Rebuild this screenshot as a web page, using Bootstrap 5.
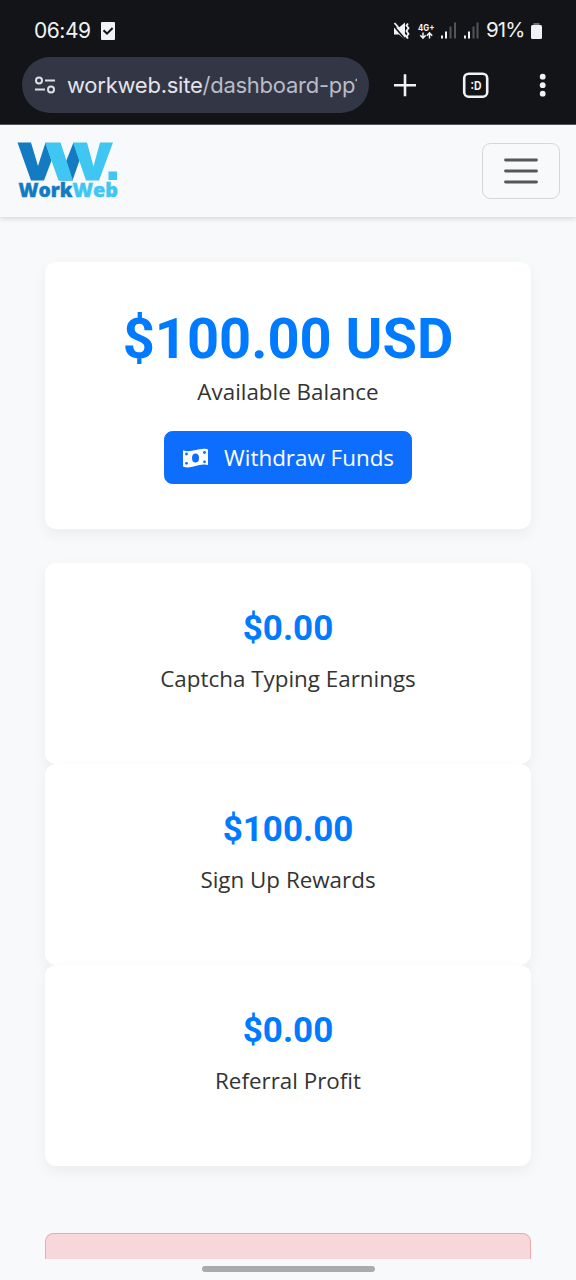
<!DOCTYPE html>
<html lang="en">
<head>
<meta charset="utf-8">
<meta name="viewport" content="width=device-width, initial-scale=1">
<title>WorkWeb Dashboard</title>
<link href="https://cdn.jsdelivr.net/npm/bootstrap@5.3.0/dist/css/bootstrap.min.css" rel="stylesheet">
<script src="https://cdn.jsdelivr.net/npm/bootstrap@5.3.0/dist/js/bootstrap.bundle.min.js" defer></script>
<style>
body{width:576px;height:1280px;overflow:hidden;background:#f8f9fa;color:#333;font-family:"Open Sans",sans-serif;font-size:22.4px;line-height:33.6px}
svg{display:block;flex:none}
.chrome{height:125px;background:#121418;color:#f1f2f4;font-family:Inter,Roboto,sans-serif;border-bottom:1px solid #55565a}
.status{height:57px;padding:4px 32px 0 34px;font-size:21px;line-height:1}
.clock{letter-spacing:-.45px;width:67px}
.pct{font-size:20.5px;letter-spacing:-.9px;width:43px;white-space:nowrap}
.tools{height:56px;padding-left:22px}
.url{width:347px;height:56px;border-radius:28px;background:#333745;padding-left:12px;font-size:22px}
.address{width:290px;overflow:hidden;white-space:nowrap;letter-spacing:-.25px;margin-left:11px;line-height:32px;color:#e3e4ea}
.address span{color:#b9bcc7}
.topbar{height:92px;padding:0 16.5px 1px 17px;box-shadow:0 2px 5px rgba(0,0,0,.13);background:#f8f9fa}
.topbar .navbar-toggler{width:77.5px;height:56px;border:1.4px solid #d5d6d8;border-radius:8.4px;padding:0}
.page{padding:44.6px 45px 0}
.tile{border:0;border-radius:11px;box-shadow:0 5.6px 14px rgba(0,0,0,.05);height:201px;padding-top:41px;background:#fff;color:#333}
.balance{height:267px;margin-bottom:34px;padding-top:44px}
.amount{font-family:Roboto,sans-serif;font-weight:700;color:#007bff;font-size:35px;line-height:50px}
.balance .amount{font-size:56px;line-height:67px}
.caption{margin-top:8px}
.balance .caption{margin-top:2px}
.withdraw{width:248px;height:52.5px;margin-top:23px;border-radius:8.4px;font-size:22.4px;padding:1px 17px 0 16.5px;background:#0d6efd}
.notice{height:26px;margin:67.4px 0 0;border:1.4px solid #eba9b0;border-bottom:0;border-radius:8.4px 8.4px 0 0;background:#f8d7da;padding:0}
.handle{width:173px;height:6px;border-radius:3px;background:#a9abac;margin:7.5px auto 0}
</style>
</head>
<body>
<header class="chrome">
  <div class="status d-flex align-items-center">
    <span class="clock">06:49</span>
    <svg width="14" height="18" viewBox="0 0 14 18"><rect width="14" height="18" rx="1" fill="#f1f2f4"/><path d="M2.500 8.300 6 11.600 11.600 6" fill="none" stroke="#121418" stroke-width="2"/></svg>
    <svg class="ms-auto" width="93" height="20" viewBox="393 20.500 93 20">
      <path d="M394 27h5l6-5v17l-6-5h-5z" fill="#f1f2f4"/>
      <path d="m393 24.500 12 14" stroke="#121418" stroke-width="1.600"/>
      <path d="m394.500 22.500 13 15" stroke="#f1f2f4" stroke-width="1.800"/>
      <path d="m408 23-1.500 2 2 2.500-2 3 2 3-2 2.500 1.500 2" fill="none" stroke="#f1f2f4" stroke-width="1.800"/>
      <text x="418" y="30" font-size="9" font-weight="700" textLength="16.500" lengthAdjust="spacingAndGlyphs" fill="#f1f2f4">4G+</text>
      <path d="M423 32v5.500m-2.700-2.700 2.700 2.800 2.700-2.800M429.500 38v-5.500m-2.700 2.700 2.700-2.800 2.700 2.800" fill="none" stroke="#f1f2f4" stroke-width="1.500"/>
      <path d="M441 35h2v3h-2zM445 31h2v7h-2zM464 35h2v3h-2zM468 31h2v7h-2z" fill="#f1f2f4"/>
      <path d="M449.500 26h2v12h-2zM454 22h2v16h-2zM472.500 26h2v12h-2zM476.500 22h2v16h-2z" fill="#53555a"/>
    </svg>
    <span class="pct ms-0">91%</span>
    <svg width="15" height="20" viewBox="529 20.500 15 20"><path d="M533.500 22.500h6v2h-6z" fill="#6c6e72"/><rect x="531" y="24.500" width="11" height="14" rx="1.500" fill="#f1f2f4"/></svg>
  </div>
  <div class="tools d-flex align-items-center">
    <div class="url d-flex align-items-center">
      <svg width="22" height="18" viewBox="0 0 22 18" fill="none" stroke="#dedfe6" stroke-width="2"><circle cx="5" cy="4.500" r="3"/><circle cx="17" cy="13.500" r="3"/><path d="M11 4.500h10M1 13.500h10"/></svg>
      <div class="address">workweb.site<span>/dashboard-pp1</span></div>
    </div>
    <svg width="207" height="28" viewBox="369 71 207 28"><path d="M394 85.300h22M405 74.300v22" stroke="#f1f2f4" stroke-width="2.600"/><rect x="464.200" y="73.700" width="23" height="23" rx="4.500" fill="none" stroke="#f1f2f4" stroke-width="2.600"/><text x="470.500" y="90" font-size="12" font-weight="700" textLength="11" lengthAdjust="spacingAndGlyphs" fill="#f1f2f4">:D</text><g fill="#f1f2f4"><circle cx="542.700" cy="76.700" r="2.900"/><circle cx="542.700" cy="85.200" r="2.900"/><circle cx="542.700" cy="93.700" r="2.900"/></g></svg>
  </div>
</header>
<nav class="navbar topbar d-flex justify-content-between align-items-center">
  <a class="navbar-brand p-0 m-0" href="#" aria-label="WorkWeb">
    <svg width="102" height="60" viewBox="17 141.500 102 60">
      <g fill="#127bc1"><path d="M17.500 143H31l7 23.500 7.500-23.500 6 18-7.500 20H31z"/><path d="m66 162 7.500-19 6 18-7 20H60z"/></g>
      <g fill="#3fc6f3"><path d="M45 143h15.500l12.500 38H58.500z"/><path d="M73 143h14l6.500 24 6.500-24h13l-14 38H86zM108.500 172h8.500v8.500h-8.500z"/></g>
      <g font-family="Open Sans, sans-serif" font-weight="800" font-size="18.500"><text x="18.500" y="197" textLength="54" lengthAdjust="spacingAndGlyphs" fill="#127bc1" stroke="#127bc1" stroke-width=".4">Work</text><text x="72.500" y="197" textLength="45.500" lengthAdjust="spacingAndGlyphs" fill="#3fc6f3" stroke="#3fc6f3" stroke-width=".4">Web</text></g>
    </svg>
  </a>
  <button class="navbar-toggler d-flex justify-content-center align-items-center" type="button" aria-label="Toggle navigation"><svg width="36" height="28" viewBox="0 0 36 28"><path d="M2.500 3h31M2.500 14h31M2.500 25h31" stroke="#56575a" stroke-width="2.800" stroke-linecap="round"/></svg></button>
</nav>
<main class="page">
  <section class="card tile balance align-items-center">
    <div class="amount">$100.00 USD</div>
    <div class="caption">Available Balance</div>
    <button class="btn btn-primary withdraw d-flex align-items-center justify-content-between"><svg width="27" height="22" viewBox="0 0 27 22"><path d="M1 3.200C9.500 6.500 16 .2 25 2c.8.200 1 .5 1 1.200V17c0 .8-.3 1.200-1 1-8-2.100-15 4-23 2-.7-.2-1-.6-1-1.300z" fill="#fff"/><ellipse cx="13.500" cy="11" rx="3.500" ry="4.500" fill="#0d6efd"/><g fill="#0d6efd"><circle cx="4.500" cy="7" r="1.400"/><circle cx="4.500" cy="16.300" r="1.400"/><circle cx="22.500" cy="5.500" r="1.400"/><circle cx="22.500" cy="14.800" r="1.400"/></g></svg><span>Withdraw Funds</span></button>
  </section>
  <section class="card tile align-items-center"><div class="amount">$0.00</div><div class="caption">Captcha Typing Earnings</div></section>
  <section class="card tile align-items-center"><div class="amount">$100.00</div><div class="caption">Sign Up Rewards</div></section>
  <section class="card tile align-items-center"><div class="amount">$0.00</div><div class="caption">Referral Profit</div></section>
  <div class="alert alert-danger notice"></div>
  <div class="handle"></div>
</main>
</body>
</html>
